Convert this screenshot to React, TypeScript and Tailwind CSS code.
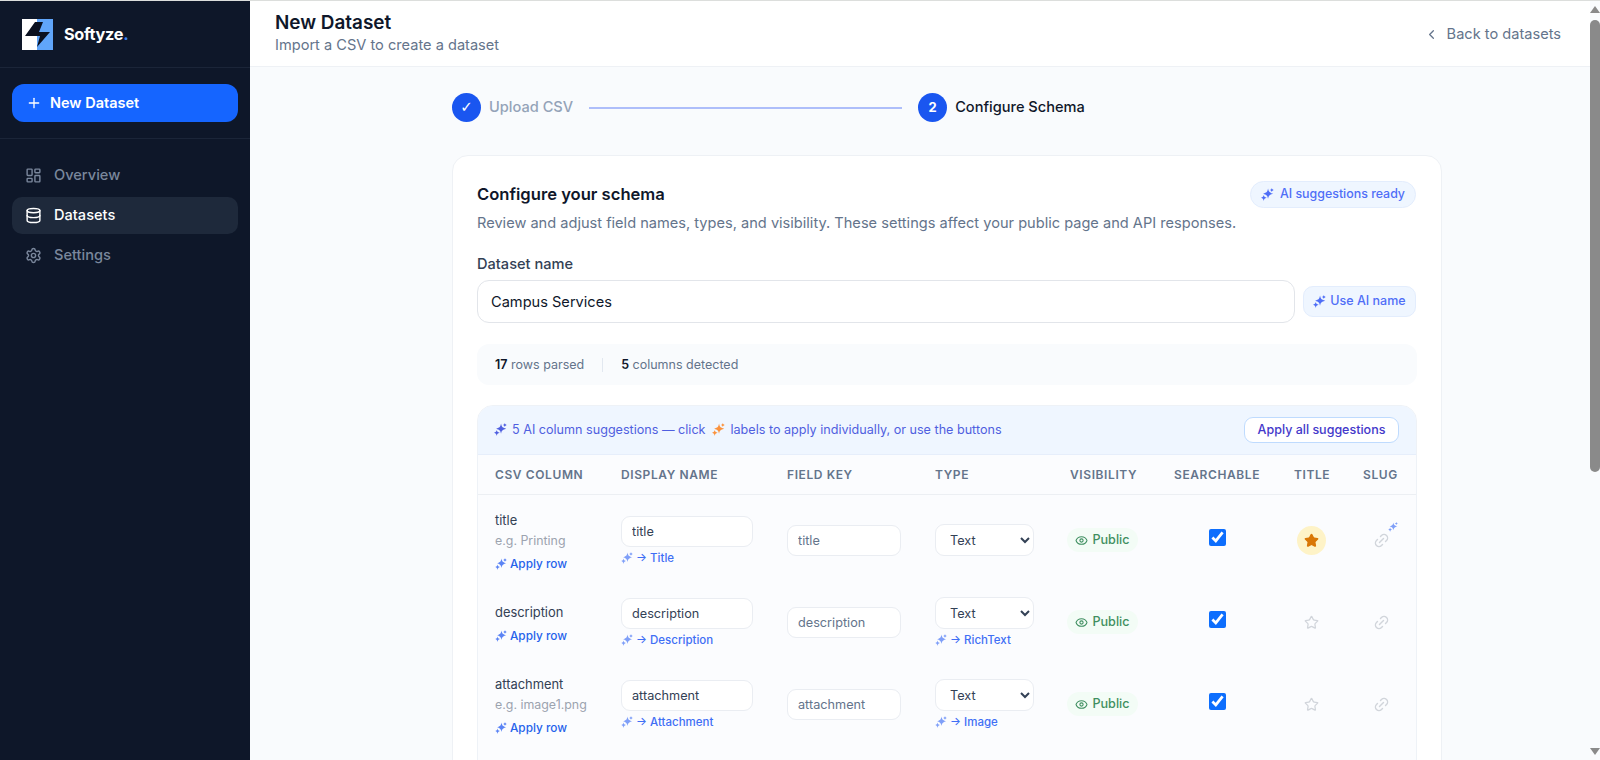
import { ChevronLeft, Database, Eye, LayoutDashboard, Link2, Plus, Settings, Star } from "lucide-react";

function Sparkle({ className }: { className: string }) {
  return (
    <svg viewBox="0 0 24 24" fill="currentColor" className={className}>
      <path d="M13 1c1 6 2.500 7.500 9.500 9.500-7 2-8.500 3.500-9.500 9.500-1-6-2.500-7.500-9-9.500 6.500-2 8-3.500 9-9.500z" />
      <path d="M20 0c.5 2.200 1.500 3.200 4 3.800-2.500.6-3.500 1.600-4 3.800-.5-2.200-1.500-3.200-4-3.800 2.500-.6 3.500-1.600 4-3.800z" />
      <path d="M5 13c.6 3 1.800 4.200 5.500 5-3.700.8-4.900 2-5.500 6-.6-4-1.800-5.200-5-6 3.200-.8 4.400-2 5-5z" />
    </svg>
  );
}

function Logo() {
  return (
    <svg viewBox="0 0 31 31" className="h-[31px] w-[31px] shrink-0">
      <rect width="15" height="31" fill="#ffffff" />
      <rect x="15" width="16" height="31" fill="#60a5fa" />
      <path d="M13 3h8l-4 10h11L15 28l3-11H3z" fill="#0a1020" />
    </svg>
  );
}

type Row = {
  csv: string;
  example?: string;
  hint: string;
  typeHint?: string;
  height: string;
  isTitle?: boolean;
};

const rows: Row[] = [
  { csv: "title", example: "e.g. Printing", hint: "Title", height: "h-[90px]", isTitle: true },
  { csv: "description", hint: "Description", typeHint: "RichText", height: "h-[74px]" },
  { csv: "attachment", example: "e.g. image1.png", hint: "Attachment", typeHint: "Image", height: "h-[90px]" },
];

function Hint({ label }: { label: string }) {
  return (
    <div className="mt-[4px] flex h-[14px] items-center gap-[3px] whitespace-nowrap text-[11.5px] font-medium leading-[14px] text-[#3f6ff5]">
      <Sparkle className="h-[12px] w-[12px] text-[#7f9ff8]" />
      <span>→ {label}</span>
    </div>
  );
}

function SchemaRow({ row }: { row: Row }) {
  return (
    <div className={`grid ${row.height} grid-cols-[92px_132px_114px_101px_70px_86px_35px_36px] items-center gap-x-[34px] pl-[17px] pr-[18px]`}>
      <div className="flex flex-col whitespace-nowrap pt-[4px]">
        <span className="text-[12.9px] leading-[20px] text-[#334155]">{row.csv}</span>
        {row.example && <span className="text-[12.4px] leading-[20px] text-[#9ca3af]">{row.example}</span>}
        <span className="mt-[3px] flex items-center gap-[3px] text-[11.8px] font-medium leading-[20px] text-[#2563eb]">
          <Sparkle className="h-[12px] w-[12px] text-[#5b84f5]" />
          Apply row
        </span>
      </div>
      <div>
        <input
          readOnly
          defaultValue={row.csv}
          className="h-[31px] w-[132px] rounded-[9px] border border-[#eaedf2] bg-white px-[10px] text-[12.7px] text-[#334155] outline-none"
        />
        <Hint label={row.hint} />
      </div>
      <input
        readOnly
        defaultValue={row.csv}
        className="h-[31px] w-[114px] rounded-[9px] border border-[#eaedf2] bg-white px-[10px] text-[12.7px] text-[#64748b] outline-none"
      />
      <div>
        <select defaultValue="Text" className="h-[32px] w-[99px] rounded-[9px] border border-[#eaedf2] bg-white px-[10px] text-[12.7px] text-[#334155] outline-none">
          <option>Text</option>
        </select>
        {row.typeHint && <Hint label={row.typeHint} />}
      </div>
      <div className="-ml-[3px] flex h-[24px] w-[71px] items-center justify-center gap-[4px] rounded-full bg-[#f3fcf6] text-[12.6px] font-medium text-[#3f8f60]">
        <Eye className="h-[13px] w-[13px]" />
        Public
      </div>
      <div className="flex justify-center pb-[5px]">
        <input type="checkbox" readOnly checked className="h-[17px] w-[17px] accent-[#0d6efd]" />
      </div>
      <div className="flex justify-center">
        {row.isTitle ? (
          <span className="flex h-[29px] w-[29px] items-center justify-center rounded-full bg-[#fef3c7]">
            <Star className="h-[15px] w-[15px] fill-[#d97706] text-[#d97706]" />
          </span>
        ) : (
          <Star className="h-[15px] w-[15px] text-[#d1d5db]" />
        )}
      </div>
      <div className="relative flex justify-center">
        <Link2 className="h-[17px] w-[17px] -rotate-45 text-[#d1d5db]" />
        {row.isTitle && <Sparkle className="absolute -top-[10px] right-[1px] h-[10px] w-[10px] text-[#7f9ff8]" />}
      </div>
    </div>
  );
}

export default function App() {
  const th = "text-[12px] font-semibold tracking-[0.6px] text-[#64748b] whitespace-nowrap";
  return (
    <div className="flex h-[760px] w-[1600px] overflow-hidden border-t border-[#dcdedc] bg-[#f9fbfd] font-['Inter',sans-serif]">
      <aside className="flex w-[250px] shrink-0 flex-col bg-[#0e1729]">
        <div className="flex h-[67px] shrink-0 items-center gap-[11px] border-b border-[#1b2538] pl-[22px]">
          <Logo />
          <span className="text-[16.3px] font-bold tracking-[-0.3px] text-white">
            Softyze<span className="text-[#3b82f6]">.</span>
          </span>
        </div>
        <div className="border-b border-[#1b2538] px-[12px] py-[16px]">
          <button className="flex h-[38px] w-full items-center gap-[8px] rounded-[12px] bg-[#1565ff] pl-[14px] text-[14.5px] font-semibold text-white">
            <Plus className="h-[16px] w-[16px]" />
            New Dataset
          </button>
        </div>
        <nav className="flex flex-col gap-[3px] px-[12px] pt-[18px] text-[14.6px] font-medium">
          <a className="flex h-[37px] items-center gap-[12px] rounded-[10px] pl-[13px] text-[#7a879c]">
            <LayoutDashboard className="h-[17px] w-[17px]" />
            Overview
          </a>
          <a className="flex h-[37px] items-center gap-[12px] rounded-[10px] bg-[#1e293b] pl-[13px] text-white">
            <Database className="h-[17px] w-[17px]" />
            Datasets
          </a>
          <a className="flex h-[37px] items-center gap-[12px] rounded-[10px] pl-[13px] text-[#7a879c]">
            <Settings className="h-[17px] w-[17px]" />
            Settings
          </a>
        </nav>
      </aside>

      <main className="flex min-w-0 flex-1 flex-col">
        <header className="flex h-[66px] shrink-0 items-center justify-between border-b border-[#eef1f5] bg-white pb-[1px] pl-[25px] pr-[29px]">
          <div>
            <h1 className="text-[18.9px] font-semibold leading-[24px] text-[#0f172a]">New Dataset</h1>
            <p className="text-[14.6px] leading-[20px] text-[#64748b]">Import a CSV to create a dataset</p>
          </div>
          <a className="mt-[3px] flex items-center gap-[8px] text-[14.6px] text-[#64748b]">
            <ChevronLeft className="h-[15px] w-[15px]" />
            Back to datasets
          </a>
        </header>

        <div className="ml-[202px] w-[990px]">
          <div className="mt-[26px] flex h-[29px] items-center">
            <span className="flex h-[29px] w-[29px] items-center justify-center rounded-full bg-[#1a56f0] font-['DejaVu_Sans',sans-serif] text-[15px] font-bold text-white">✓</span>
            <span className="ml-[8px] text-[14.6px] font-medium text-[#94a3b8]">Upload CSV</span>
            <div className="mx-[16px] h-[2px] w-[313px] bg-[#aebefa]" />
            <span className="flex h-[29px] w-[29px] items-center justify-center rounded-full bg-[#1a56f0] text-[13px] font-bold text-white">2</span>
            <span className="ml-[8px] text-[14.6px] font-medium text-[#0f172a]">Configure Schema</span>
          </div>

          <section className="mt-[33px] min-h-[640px] rounded-[16px] border border-[#eef1f5] bg-white px-[24px] pt-[25px] pb-[40px]">
            <div className="flex items-start justify-between">
              <h2 className="text-[16.6px] font-semibold leading-[26px] text-[#0f172a]">Configure your schema</h2>
              <span className="mr-[1px] flex h-[27px] items-center gap-[6px] rounded-full border border-[#e3edfd] bg-[#eff6ff] px-[10px] text-[12.4px] font-medium text-[#4f6ef7]">
                <Sparkle className="h-[13px] w-[13px]" />
                AI suggestions ready
              </span>
            </div>
            <p className="mt-[4px] text-[14.6px] leading-[22px] text-[#64748b]">
              Review and adjust field names, types, and visibility. These settings affect your public page and API responses.
            </p>

            <label className="mt-[20px] block text-[14.6px] font-medium leading-[20px] text-[#334155]">Dataset name</label>
            <div className="mt-[6px] flex items-center gap-[8px]">
              <input
                readOnly
                defaultValue="Campus Services"
                className="h-[43px] flex-1 rounded-[12px] border border-[#e2e5ea] bg-white px-[13px] text-[14.6px] text-[#0f172a] outline-none"
              />
              <button className="mr-[1px] flex h-[31px] w-[113px] items-center justify-center gap-[4px] rounded-[10px] border border-[#e3edfd] bg-[#eff6ff] text-[12.5px] font-medium text-[#4f6ef7]">
                <Sparkle className="h-[13px] w-[13px]" />
                Use AI name
              </button>
            </div>

            <div className="mt-[21px] flex h-[41px] items-center rounded-[12px] bg-[#f9fbfd] pl-[18px] pt-[1px] text-[12.5px] text-[#64748b]">
              <span>
                <b className="font-semibold text-[#0f172a]">17</b> rows parsed
              </span>
              <span className="mx-[18px] h-[14px] w-px bg-[#e2e8f0]" />
              <span>
                <b className="font-semibold text-[#0f172a]">5</b> columns detected
              </span>
            </div>

            <div className="mt-[20px] min-h-[480px] overflow-hidden rounded-[16px] border border-[#eef2f7] bg-[#fbfcfe]">
              <div className="flex h-[49px] items-center justify-between border-b border-[#e6eefb] bg-[#eff6ff] pl-[16px] pr-[17px]">
                <div className="flex items-center gap-[5px] text-[12.6px] text-[#4f5fe0]">
                  <Sparkle className="h-[13px] w-[13px]" />
                  <span>5 AI column suggestions — click</span>
                  <Sparkle className="mx-[1px] h-[13px] w-[13px] text-[#fb923c]" />
                  <span>labels to apply individually, or use the buttons</span>
                </div>
                <button className="flex h-[26px] w-[155px] items-center justify-center rounded-[9px] border border-[#bfdbfe] bg-white text-[12.5px] font-medium text-[#4338ca]">
                  Apply all suggestions
                </button>
              </div>
              <div className="grid h-[40px] grid-cols-[92px_132px_114px_101px_70px_86px_35px_36px] items-center gap-x-[34px] border-b border-[#eceff3] pl-[17px] pr-[18px]">
                <span className={th}>CSV COLUMN</span>
                <span className={th}>DISPLAY NAME</span>
                <span className={th}>FIELD KEY</span>
                <span className={th}>TYPE</span>
                <span className={th}>VISIBILITY</span>
                <span className={th}>SEARCHABLE</span>
                <span className={th}>TITLE</span>
                <span className={th}>SLUG</span>
              </div>
              {rows.map((row) => (
                <SchemaRow key={row.csv} row={row} />
              ))}
            </div>
          </section>
        </div>
      </main>

      <div className="flex w-[10px] shrink-0 flex-col items-center bg-[#f9fbfd]">
        <div className="mt-[5px] h-0 w-0 border-x-[5px] border-b-[7px] border-x-transparent border-b-[#8a8a8a]" />
        <div className="mt-[7px] h-[452px] w-[10px] rounded-[5px] bg-[#8a8a8a]" />
        <div className="mb-[5px] mt-auto h-0 w-0 border-x-[5px] border-t-[7px] border-x-transparent border-t-[#8a8a8a]" />
      </div>
    </div>
  );
}
